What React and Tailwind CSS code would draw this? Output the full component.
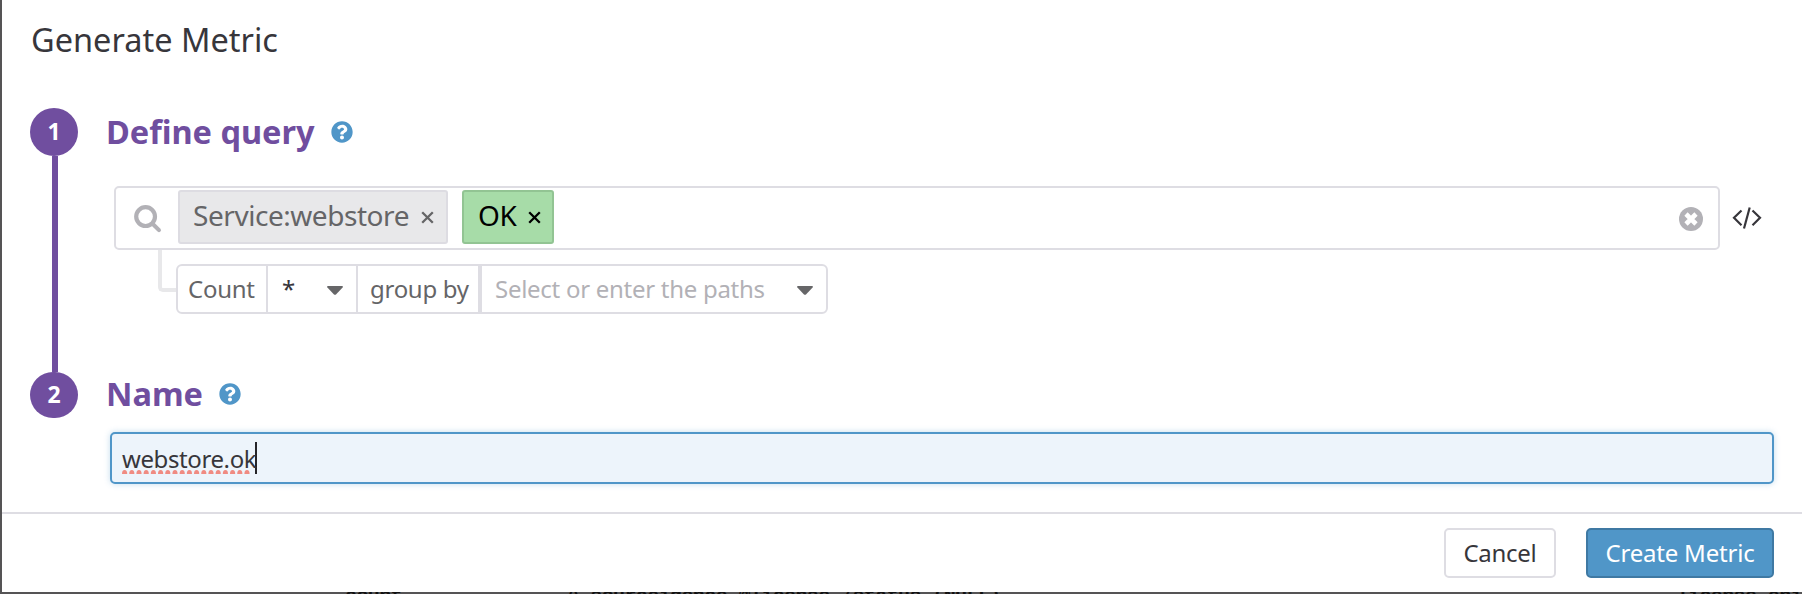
import React from "react";

const HelpIcon = ({ className }) => (
  <svg viewBox="0 0 512 512" className={className} fill="#5096c8">
    <path d="M504 256c0 136.997-111.043 248-248 248S8 392.997 8 256C8 119.083 119.043 8 256 8s248 111.083 248 248zM262.655 90c-54.497 0-89.255 22.957-116.549 63.758-3.536 5.286-2.353 12.415 2.715 16.258l34.699 26.31c5.205 3.947 12.621 3.008 16.665-2.122 17.864-22.658 30.113-35.797 57.303-35.797 20.429 0 45.698 13.148 45.698 32.958 0 14.976-12.363 22.667-32.534 33.976C247.128 238.528 216 254.941 216 296v4c0 6.627 5.373 12 12 12h56c6.627 0 12-5.373 12-12v-1.333c0-28.462 83.186-29.647 83.186-106.667 0-58.002-60.165-102-116.531-102zM256 338c-25.365 0-46 20.635-46 46 0 25.364 20.635 46 46 46s46-20.636 46-46c0-25.365-20.635-46-46-46z" />
  </svg>
);

const SearchIcon = () => (
  <svg viewBox="0 0 28 30" className="h-[30px] w-7" fill="none" stroke="#b2b1b6">
    <circle cx="11.6" cy="12.6" r="9.4" strokeWidth="4.2" />
    <path d="M18.800 20l6.200 6.200" strokeWidth="4" strokeLinecap="round" />
  </svg>
);

const ClearIcon = () => (
  <svg viewBox="0 0 24 24" className="size-6">
    <circle cx="12" cy="12" r="12" fill="#b2b1b6" />
    <path d="M7 7l10 10M17 7l-10 10" stroke="#fff" strokeWidth="4.600" />
  </svg>
);

const CodeIcon = () => (
  <svg viewBox="0 0 30 22" className="h-[22px] w-[30px]" fill="none" stroke="#37363b" strokeWidth="2.200">
    <path d="M9.500 3.500L2 10.800l7.500 7.500M20.500 3.500l7.500 7.300-7.500 7.500" />
    <path d="M17.700 0.500L12 21.500" />
  </svg>
);

const Caret = () => (
  <svg viewBox="0 0 16 9" className="mt-[2px] h-[9px] w-4 shrink-0" fill="#666668">
    <path d="M1 0h14q1.500 .4.6 1.500L9 8.400q-1 .8-2 0L.4 1.500Q-.5 .4 1 0z" />
  </svg>
);

const Cross = () => (
  <svg viewBox="0 0 13 13" className="mt-[4px] h-[13px] w-[13px] shrink-0" fill="none" stroke="currentColor" strokeWidth="2.300">
    <path d="M1.200 1.200l10.600 10.600M11.800 1.200L1.200 11.800" />
  </svg>
);

export default function App() {
  return (
    <div className="flex h-[594px] w-[1802px] flex-col overflow-hidden bg-[#555455] pl-[2px] font-['Noto_Sans',sans-serif] text-2xl tracking-[-0.28px] text-[#37363b]">
      <div className="flex h-[592px] shrink-0 flex-col bg-white">
        <h1 className="h-[108px] shrink-0 pt-[16px] pl-[29px] text-[32.5px] leading-[48px] tracking-normal">Generate Metric</h1>
        <main className="flex h-[404px] shrink-0 pl-7">
          <div className="flex w-12 flex-col items-center text-[23px] leading-[30px] font-bold text-white">
            <div className="flex h-12 w-12 items-center justify-center rounded-full bg-[#704e9f] pb-[2px]">1</div>
            <div className="ml-[2px] h-[216px] w-[6px] bg-[#704e9f]" />
            <div className="flex h-[46px] w-12 items-center justify-center rounded-[23px] bg-[#704e9f] pb-[2px]">2</div>
          </div>
          <div className="flex flex-col pl-[30px]">
            <div className="flex h-[78px] items-start">
              <h2 className="-ml-[2px] w-[225px] text-[32.5px] leading-[48px] font-bold tracking-normal whitespace-nowrap text-[#704e9f]">Define query</h2>
              <HelpIcon className="mt-[13px] size-[22px]" />
            </div>
            <div className="flex items-center pl-[6px]">
              <div className="flex h-16 w-[1606px] items-start rounded-[5px] border-2 border-[#dedde3] pt-[2px]">
                <div className="flex w-[62px] justify-end pt-[14px] pr-[16px]"><SearchIcon /></div>
                <div className="flex h-[54px] w-[270px] items-center justify-between rounded-[3px] border-2 border-[#dddce2] bg-[#e8e8ea] pr-[12px] pb-[3px] pl-[13px] text-[28px] tracking-[-0.45px] text-[#656567]">
                  <span>Service:webstore</span><Cross />
                </div>
                <div className="ml-[14px] flex h-[54px] w-[92px] items-center justify-between rounded-[3px] border-2 border-[#92c493] bg-[#a7dca8] pr-[11px] pb-[3px] pl-[14px] text-[28px] tracking-[-0.45px] text-black">
                  <span>OK</span><Cross />
                </div>
                <div className="mt-[17px] mr-[15px] ml-auto"><ClearIcon /></div>
              </div>
              <div className="ml-[12px]"><CodeIcon /></div>
            </div>
            <div className="flex h-[122px] items-start pl-[50px]">
              <div className="h-[42px] w-[18px] rounded-bl-[5px] border-b-4 border-l-4 border-[#e8e8ea]" />
              <div className="mt-[14px] flex h-[50px] w-[652px] items-stretch rounded-[6px] border-2 border-[#dedde3] leading-[46px] whitespace-nowrap text-[#656567]">
                <div className="w-[88px] pl-[10px]">Count</div>
                <div className="flex w-[92px] items-center justify-between border-x-2 border-[#dedde3] pr-[13px] pl-[14px] text-[#37363b]"><span>*</span><Caret /></div>
                <div className="w-[120px] pl-[12px]">group by</div>
                <div className="flex flex-1 items-center justify-between border-l-4 border-[#dedde3] pr-[13px] pl-[13px] text-[#b2b1b6]"><span>Select or enter the paths</span><Caret /></div>
              </div>
            </div>
            <div className="flex h-[60px] items-start">
              <h2 className="-ml-[2px] w-[113px] text-[32.5px] leading-[44px] font-bold tracking-normal text-[#704e9f]">Name</h2>
              <HelpIcon className="mt-[11px] size-[22px]" />
            </div>
            <div className="ml-[2px] flex h-[52px] w-[1664px] items-start rounded-[5px] border-2 border-[#5096c8] bg-[#edf4fb] pl-[10px] shadow-[0_0_6px_#5096c855]">
              <div className="mt-[2px] leading-[46px] tracking-[-0.4px]">
                <span className="relative inline-block">
                  webstore.ok
                  <svg className="absolute top-[34px] left-0 h-[4px] w-[129px]" fill="#f08b82">
                    {Array.from({ length: 18 }, (_, i) => <path key={i} d={`M${i * 7.2} 4q0-4 2.600-4t2.600 4z`} />)}
                  </svg>
                </span>
              </div>
              <div className="-ml-[1px] mt-[8px] h-8 w-[2px] bg-[#252428]" />
            </div>
          </div>
        </main>
        <footer className="flex h-[80px] shrink-0 items-start justify-end gap-[30px] border-t-2 border-[#dedde3] pt-[14px] pr-7">
          <button className="h-[50px] w-28 rounded-[5px] border-2 border-[#dedde3] leading-[46px]">Cancel</button>
          <button className="h-[50px] w-[188px] rounded-[5px] border-2 border-[#3f79a3] bg-[#5096c8] leading-[46px] tracking-[-0.2px] whitespace-nowrap text-white">Create Metric</button>
        </footer>
      </div>
      <div className="flex h-[2px] shrink-0 overflow-hidden pl-[343px] font-['Liberation_Mono',monospace] text-[20px] leading-[20px] font-bold tracking-[-0.6px] whitespace-pre text-[#111]">
        <span className="-mt-[5px] w-[224px]">count</span>
        <span className="-mt-[5px] w-[1117px]">^ sourceidence @license /status (NULL)</span>
        <span className="-mt-[5px]">license_eni</span>
      </div>
    </div>
  );
}
